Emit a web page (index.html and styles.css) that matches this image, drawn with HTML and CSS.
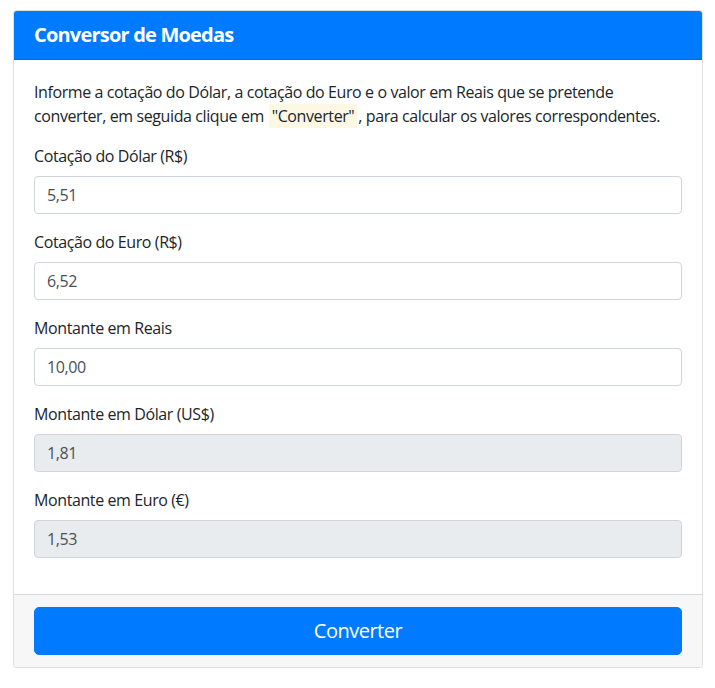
FILE: index.html
```html
<!DOCTYPE html>
<html lang="pt-BR">
<head>
<meta charset="utf-8">
<title>Conversor de Moedas</title>
<link rel="stylesheet" href="styles.css">
</head>
<body>
<div class="card">
  <div class="card-header"><h5 class="title">Conversor de Moedas</h5></div>
  <div class="card-body">
    <p class="intro">Informe a cotação do Dólar, a cotação do Euro e o valor em Reais que se pretende converter, em seguida clique em <mark class="hl">"Converter"</mark>, para calcular os valores correspondentes.</p>
    <div class="form-group">
      <label class="lbl">Cotação do Dólar (R$)</label>
      <input class="field" type="text" value="5,51">
    </div>
    <div class="form-group">
      <label class="lbl">Cotação do Euro (R$)</label>
      <input class="field" type="text" value="6,52">
    </div>
    <div class="form-group">
      <label class="lbl">Montante em Reais</label>
      <input class="field" type="text" value="10,00">
    </div>
    <div class="form-group">
      <label class="lbl">Montante em Dólar (US$)</label>
      <input class="field readonly" type="text" value="1,81" readonly>
    </div>
    <div class="form-group">
      <label class="lbl">Montante em Euro (€)</label>
      <input class="field readonly" type="text" value="1,53" readonly>
    </div>
  </div>
  <div class="card-footer">
    <button class="btn" type="button">Converter</button>
  </div>
</div>
</body>
</html>
```

FILE: styles.css
```css
* { box-sizing: border-box; }
html, body {
  margin: 0;
  padding: 0;
  background: #fff;
}
body {
  font-family: "Open Sans", "Noto Sans", "Liberation Sans", sans-serif;
  font-size: 16px;
  line-height: 1.5;
  letter-spacing: -0.4px;
  color: #212529;
  padding: 10px 12px 0 13px;
}
.card {
  border: 1px solid rgba(0,0,0,.125);
  border-radius: 4px;
  overflow: hidden;
  background: #fff;
}
.card-header {
  background: #007bff;
  padding: 12px 20px;
  border-bottom: 1px solid rgba(0,0,0,.125);
}
.title {
  margin: 0;
  color: #fff;
  font-size: 20px;
  font-weight: 700;
  line-height: 1.2;
  letter-spacing: -0.8px;
}
.card-body {
  padding: 20px;
}
.intro {
  margin: 0 0 16px;
}
.hl {
  display: inline-block;
  background: #fcf8e3;
  color: #212529;
  line-height: 18px;
  padding: 3px 3px;
  margin: 0 1px;
}
.form-group {
  margin-bottom: 16px;
}
.lbl {
  display: block;
  margin-bottom: 8px;
}
.field {
  display: block;
  width: 100%;
  height: 38px;
  padding: 6px 12px;
  font: inherit;
  letter-spacing: -0.4px;
  color: #495057;
  background: #fff;
  border: 1px solid #ced4da;
  border-radius: 4px;
}
.field.readonly {
  background: #e9ecef;
}
.card-footer {
  background: #f7f7f7;
  border-top: 1px solid rgba(0,0,0,.125);
  padding: 12px 20px;
}
.btn {
  display: block;
  width: 100%;
  height: 48px;
  font: inherit;
  font-size: 20px;
  letter-spacing: -0.5px;
  color: #fff;
  background: #007bff;
  border: 1px solid #007bff;
  border-radius: 5px;
  cursor: pointer;
}
```
